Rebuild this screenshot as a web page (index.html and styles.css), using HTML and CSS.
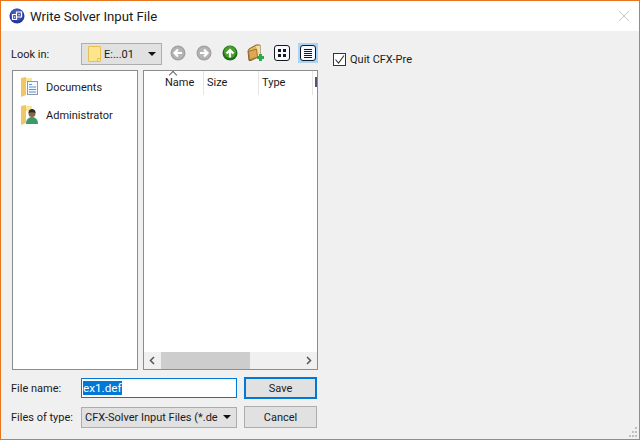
FILE: index.html
```html
<!DOCTYPE html>
<html lang="en">
<head>
<meta charset="utf-8">
<title>Write Solver Input File</title>
<link rel="stylesheet" href="styles.css">
</head>
<body>
<div class="window">
  <header class="titlebar">
    <svg class="app-icon" width="16" height="16" viewBox="0 0 16 16"><circle cx="8" cy="8" r="7.500" fill="#27379a"/><circle cx="8" cy="6.500" r="6" fill="#5a6cc8" opacity=".6"/><path d="M3.500 6.500h4v5h-4zM7.500 4h5v5h-5z" fill="none" stroke="#fff" stroke-width="1.200"/><rect x="5" y="8.500" width="1.200" height="1.200" fill="#fff"/><rect x="9.500" y="6" width="1.200" height="1.200" fill="#fff"/></svg>
    <span class="title">Write Solver Input File</span>
    <svg class="close" width="10" height="10" viewBox="0 0 10 10"><path d="M0 0l10 10M10 0L0 10" stroke="#c8c8c8" stroke-width="1"/></svg>
  </header>
  <main class="content">
    <section class="dialog">
      <div class="toolbar">
        <span class="lookin-label">Look in:</span>
        <div class="combo lookin-combo">
          <svg width="13" height="16" viewBox="0 0 13 16"><path d="M.5.500h12v15H.5z" fill="#fde48f" stroke="#e6c252"/><path d="M9.500 15.500v-3h3" fill="none" stroke="#e6c252"/></svg>
          <span class="combo-text">E:...01</span>
          <span class="arrow"></span>
        </div>
        <div class="tools">
          <span class="tool"><svg width="16" height="16" viewBox="0 0 16 16"><circle cx="8" cy="8" r="7.500" fill="#a3a3a3"/><circle cx="8" cy="8" r="6" fill="#b5b5b5"/><path d="M12 8H5M8 4.500L4.500 8 8 11.500" fill="none" stroke="#fff" stroke-width="2.200"/></svg></span>
          <span class="tool"><svg width="16" height="16" viewBox="0 0 16 16"><circle cx="8" cy="8" r="7.500" fill="#a3a3a3"/><circle cx="8" cy="8" r="6" fill="#b5b5b5"/><path d="M4 8h7M8 4.500L11.500 8 8 11.500" fill="none" stroke="#fff" stroke-width="2.200"/></svg></span>
          <span class="tool"><svg width="16" height="16" viewBox="0 0 16 16"><circle cx="8" cy="8" r="7.500" fill="#1f6f16"/><circle cx="8" cy="7" r="6" fill="#45a02c"/><path d="M8 12.500V5M4.500 8.500L8 5l3.500 3.500" fill="none" stroke="#fff" stroke-width="2.200"/></svg></span>
          <span class="tool"><svg width="18" height="18" viewBox="0 0 18 18"><path d="M1 7l1-2 7-4h4v11l-9 4.500H2z" fill="#e9b65e" stroke="#85652c"/><path d="M9 2l4-.5v10l-3 1.500z" fill="#f7dc9c"/><path d="M2.500 16L1.500 7.500 9.500 5l1 8z" fill="#dfa850" stroke="#85652c" stroke-width=".8"/><path d="M10 13.500h7M13.500 10v7" stroke="#2ea84a" stroke-width="3"/></svg></span>
          <span class="tool"><svg width="16" height="16" viewBox="0 0 16 16"><rect x=".5" y=".5" width="15" height="15" rx="2.500" fill="#f6f9ff" stroke="#16181c"/><path d="M4 4h3v3H4zM9 4h3v3H9zM4 9h3v3H4zM9 9h3v3H9z" fill="#16181c"/></svg></span>
          <span class="tool"><span class="view-active"><svg width="16" height="16" viewBox="0 0 16 16"><rect x=".5" y=".5" width="15" height="15" rx="2.500" fill="#f6f9ff" stroke="#16181c"/><path d="M4 4.500h8M4 6.500h8M4 8.500h8M4 10.500h8M4 12.500h8" stroke="#16181c"/></svg></span></span>
        </div>
      </div>
      <div class="panes">
        <div class="sidebar">
          <div class="place">
            <svg width="18" height="20" viewBox="0 0 18 20"><path d="M0 1l5-1v18l-5 2z" fill="#f0c767"/><path d="M5 1h6v4H5z" fill="#fbe3a0"/><rect x="6.500" y="4.500" width="10" height="13" fill="#f4f7fb" stroke="#8e9aa8"/><path d="M8 7.500h3M8 10h7M8 12.500h7M8 15h7" stroke="#4d9bdc"/></svg>
            <span>Documents</span>
          </div>
          <div class="place">
            <svg width="18" height="20" viewBox="0 0 18 20"><path d="M0 1l5-1v18l-5 2z" fill="#f0c767"/><path d="M5 1h6v5H5z" fill="#fbe3a0"/><circle cx="11" cy="8.500" r="3.500" fill="#8a6444"/><path d="M7.500 8c0-3 1.500-4 3.500-4s3.500 1 3.500 4c-2-1-5-1-7 0z" fill="#26302c"/><path d="M5 19c0-5 3-7 6-7s6 2 6 7z" fill="#3c9a68"/></svg>
            <span>Administrator</span>
          </div>
        </div>
        <div class="files">
          <div class="file-header">
            <span class="sort-mark"></span>
            <span class="col col-name">Name</span>
            <span class="col col-size">Size</span>
            <span class="col col-type">Type</span>
            <span class="col col-date"></span>
          </div>
          <div class="file-body"></div>
          <div class="hscroll">
            <svg width="17" height="17" viewBox="0 0 17 17"><path d="M10 5L6.500 8.500 10 12" fill="none" stroke="#555" stroke-width="1.500"/></svg>
            <div class="track"><div class="thumb"></div></div>
            <svg width="17" height="17" viewBox="0 0 17 17"><path d="M7 5l3.500 3.500L7 12" fill="none" stroke="#555" stroke-width="1.500"/></svg>
          </div>
        </div>
      </div>
      <div class="form">
        <label class="form-label">File name:</label>
        <div class="name-input"><span class="selected">ex1.def</span></div>
        <button class="btn default">Save</button>
        <label class="form-label">Files of type:</label>
        <div class="combo type-combo"><span class="combo-text">CFX-Solver Input Files (*.de</span><span class="arrow"></span></div>
        <button class="btn">Cancel</button>
      </div>
    </section>
    <aside class="options">
      <span class="checkbox"><svg width="13" height="13" viewBox="0 0 13 13"><path d="M2.500 6.500l3 3.500 5.500-7.500" fill="none" stroke="#333" stroke-width="1.100"/></svg></span>
      <span class="option-text">Quit CFX-Pre</span>
    </aside>
    <svg class="grip" width="12" height="12" viewBox="0 0 12 12"><path d="M9 1h2v2H9zM6 5h2v2H6zM9 5h2v2H9zM3 9h2v2H3zM6 9h2v2H6zM9 9h2v2H9z" fill="#c0c0c0"/></svg>
  </main>
</div>
</body>
</html>
```
FILE: styles.css
```css
* { box-sizing: border-box; }
html, body { margin: 0; padding: 0; }
body { font-family: Roboto, sans-serif; font-size: 11px; color: #1a1a1a; }
.window { width: 640px; height: 440px; border: 1px solid #e8741e; display: flex; flex-direction: column; background: #f0f0f0; }
.titlebar { height: 30px; flex: none; background: #fff; display: flex; align-items: center; padding: 0 10px 0 8px; }
.app-icon { flex: none; }
.title { margin-left: 5px; font-size: 13.200px; flex: 1; }
.content { flex: 1; position: relative; display: flex; padding: 12px 0 0 10px; }
.dialog { width: 310px; flex: none; display: flex; flex-direction: column; }
.toolbar { height: 22px; display: flex; align-items: center; }
.lookin-label { width: 70px; flex: none; }
.combo { display: flex; align-items: center; background: #e1e1e1; border: 1px solid #adadad; }
.lookin-combo { width: 81px; height: 22px; flex: none; padding: 0 0 0 6px; gap: 3px; }
.combo-text { flex: 1; white-space: nowrap; overflow: hidden; }
.arrow { flex: none; width: 0; height: 0; border-left: 4px solid transparent; border-right: 4px solid transparent; border-top: 4px solid #111; margin-right: 5px; }
.tools { display: flex; flex: none; align-items: center; margin: -2px 0 0 3px; }
.tool { width: 26px; height: 20px; display: flex; align-items: center; justify-content: center; }
.view-active { width: 20px; height: 20px; background: #a9d4f5; display: flex; align-items: center; justify-content: center; }
.panes { display: flex; gap: 5px; margin: 5px 0 0 1px; height: 300px; }
.sidebar { width: 126px; background: #fff; border: 1px solid #8c8c8c; padding: 6px 0 0 8px; display: flex; flex-direction: column; gap: 8px; }
.place { display: flex; align-items: center; gap: 7px; height: 20px; }
.files { width: 175px; background: #fff; border: 1px solid #8c8c8c; display: flex; flex-direction: column; }
.file-header { height: 24px; flex: none; display: flex; position: relative; overflow: hidden; }
.sort-mark { position: absolute; left: 26px; top: 1px; width: 6px; height: 6px; border-left: 1px solid #666; border-top: 1px solid #666; transform: rotate(45deg); }
.col { border-right: 1px solid #e5e5e5; padding: 5px 0 0 3px; height: 24px; flex: none; }
.col-name { width: 60px; padding-left: 21px; }
.col-size { width: 55px; }
.col-type { width: 54px; }
.col-date { width: 4px; border: 0; padding: 0; margin: 6px 0 6px 2px; height: 10px; background: #5d4f78; }
.file-body { flex: 1; }
.hscroll { height: 17px; flex: none; display: flex; background: #f0f0f0; }
.track { flex: 1; }
.thumb { width: 89px; height: 17px; background: #cdcdcd; }
.form { margin-top: 7px; display: grid; grid-template-columns: 70px 156px 80px; grid-auto-rows: 22px; row-gap: 7px; align-items: center; }
.form-label { white-space: nowrap; }
.name-input { height: 20px; background: #fff; border: 1px solid #0078d7; display: flex; align-items: center; padding-left: 1px; font-size: 11.700px; }
.selected { background: #0078d7; color: #fff; }
.btn { height: 22px; width: 73px; margin-left: 7px; font: inherit; color: inherit; background: #e1e1e1; border: 1px solid #adadad; padding: 0; }
.btn.default { border: 2px solid #0078d7; }
.type-combo { height: 21px; padding-left: 3px; gap: 5px; }
.options { margin: 8px 0 0 12px; display: flex; align-items: center; gap: 4px; height: 16px; }
.option-text { padding-top: 1px; }
.checkbox { width: 13px; height: 13px; border: 1px solid #333; background: #fff; display: block; flex: none; }
.checkbox svg { display: block; margin: -1px; }
.grip { position: absolute; right: 1px; bottom: 1px; }
.close { flex: none; }
```
